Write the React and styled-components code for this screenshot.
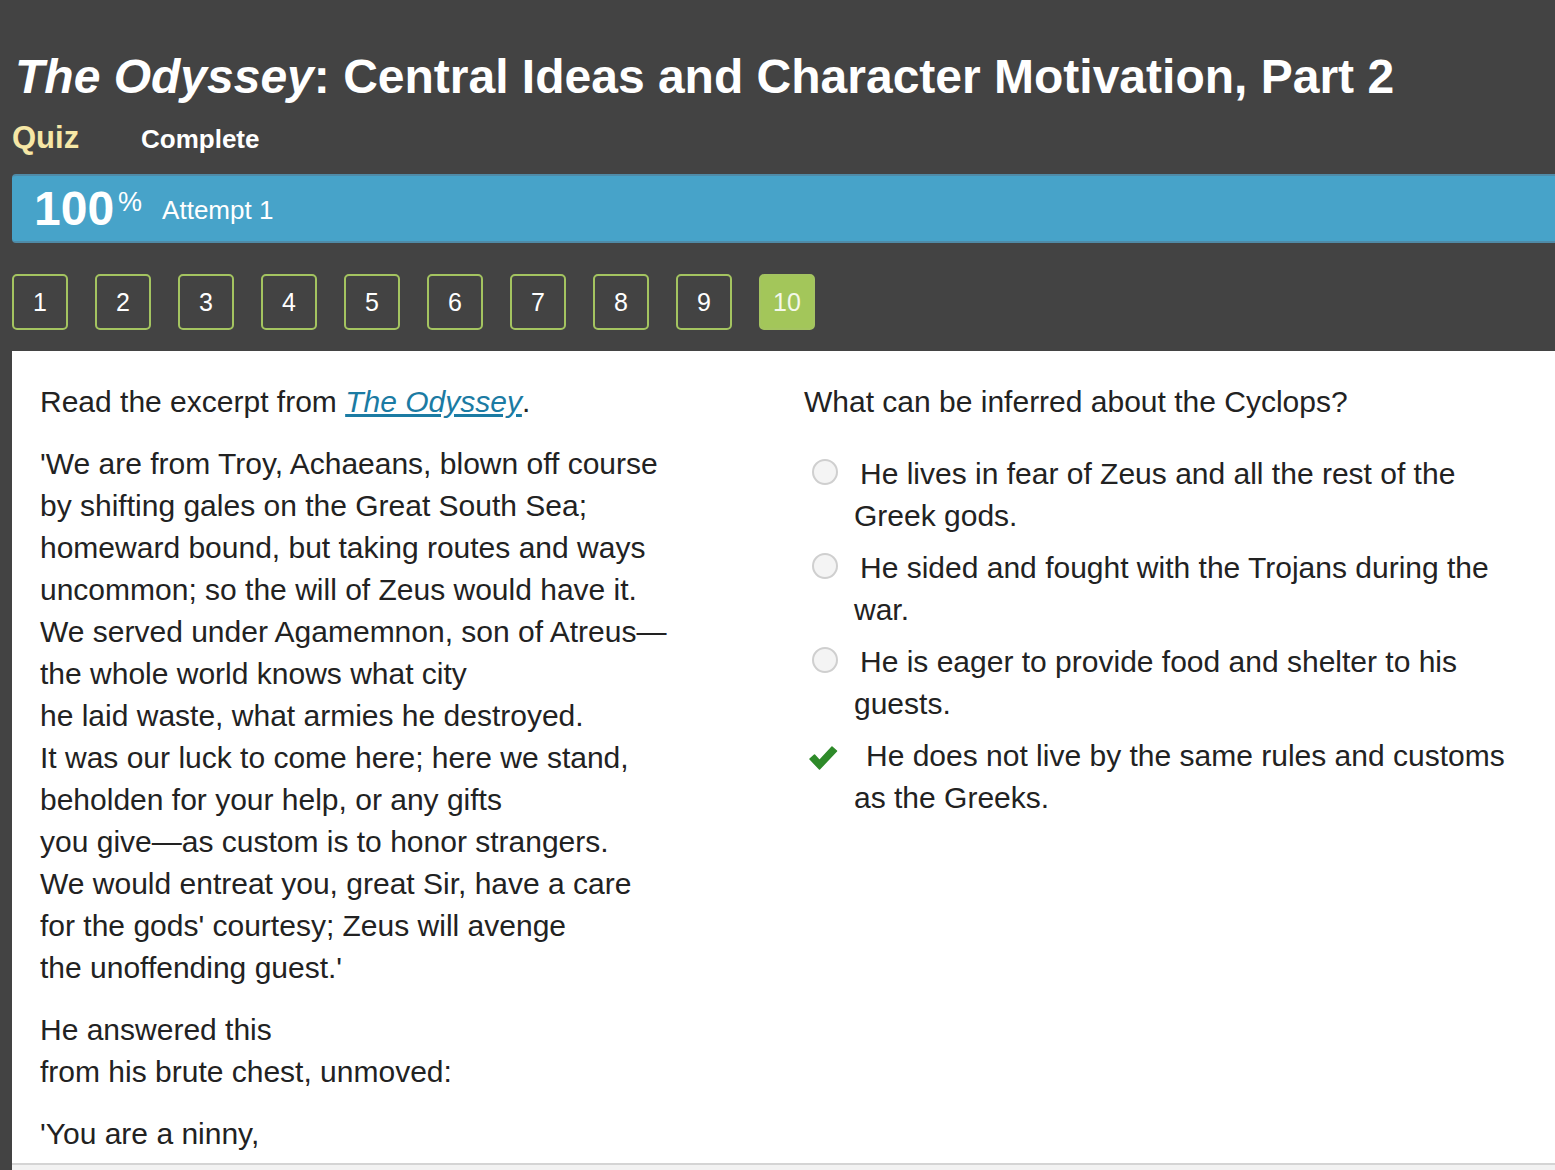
import React from 'react';
import styled, { createGlobalStyle } from 'styled-components';

const GlobalStyle = createGlobalStyle`
  html, body {
    margin: 0;
    padding: 0;
    background: #434343;
    font-family: "Liberation Sans", Arial, sans-serif;
  }
`;

const poem = [
  "'We are from Troy, Achaeans, blown off course",
  'by shifting gales on the Great South Sea;',
  'homeward bound, but taking routes and ways',
  'uncommon; so the will of Zeus would have it.',
  'We served under Agamemnon, son of Atreus—',
  'the whole world knows what city',
  'he laid waste, what armies he destroyed.',
  'It was our luck to come here; here we stand,',
  'beholden for your help, or any gifts',
  'you give—as custom is to honor strangers.',
  'We would entreat you, great Sir, have a care',
  "for the gods' courtesy; Zeus will avenge",
  "the unoffending guest.'",
];

const answers = [
  { text: 'He lives in fear of Zeus and all the rest of the Greek gods.' },
  { text: 'He sided and fought with the Trojans during the war.' },
  { text: 'He is eager to provide food and shelter to his guests.' },
  { text: 'He does not live by the same rules and customs as the Greeks.', correct: true },
];

const App = () => {
  return (
    <>
      <GlobalStyle />
      <Page>
        <Header>
          <Title>
            <em>The Odyssey</em>: Central Ideas and Character Motivation, Part 2
          </Title>
          <SubRow>
            <Kind>Quiz</Kind>
            <Status>Complete</Status>
          </SubRow>
        </Header>
        <ScoreBar>
          <Score>
            100<sup>%</sup>
          </Score>
          <Attempt>Attempt 1</Attempt>
        </ScoreBar>
        <Pager>
          {Array.from({ length: 10 }, (_, i) => (
            <PageButton key={i} active={i === 9}>
              {i + 1}
            </PageButton>
          ))}
        </Pager>
        <Panel>
          <Passage>
            <Para>
              Read the excerpt from <Link>The Odyssey</Link>.
            </Para>
            <Para>
              {poem.map((line, i) => (
                <Line key={i}>{line}</Line>
              ))}
            </Para>
            <Para>
              <Line>He answered this</Line>
              <Line>from his brute chest, unmoved:</Line>
            </Para>
            <Para>
              <Line>'You are a ninny,</Line>
            </Para>
          </Passage>
          <Question>
            <Para>What can be inferred about the Cyclops?</Para>
            <Options>
              {answers.map((a, i) => (
                <Option key={i}>
                  <Mark>
                    {a.correct ? (
                      <svg width="30" height="28" viewBox="0 0 30 28">
                        <path
                          d="M2 16 L6.5 12 L11.5 17.5 L24 4 L28.5 8 L11.5 26 Z"
                          fill="#2e8a29"
                          stroke="#2e8a29"
                          strokeWidth="1.5"
                          strokeLinejoin="round"
                        />
                      </svg>
                    ) : (
                      <Radio />
                    )}
                  </Mark>
                  <OptionText correct={a.correct}>{a.text}</OptionText>
                </Option>
              ))}
            </Options>
          </Question>
        </Panel>
        <Footer />
      </Page>
    </>
  );
};

const Page = styled.div`
  padding-left: 12px;
  overflow: hidden;
  height: 1170px;
  display: flex;
  flex-direction: column;
`;

const Header = styled.div`
  padding-top: 50px;
`;

const Title = styled.h1`
  margin: 0 0 0 3px;
  font-size: 48px;
  line-height: 54px;
  font-weight: bold;
  color: #ffffff;
  white-space: nowrap;

  em {
    font-style: italic;
  }
`;

const SubRow = styled.div`
  display: flex;
  align-items: baseline;
  margin-top: 16px;
  height: 42px;
`;

const Kind = styled.div`
  font-size: 31px;
  font-weight: bold;
  color: #f6e7a6;
  width: 129px;
`;

const Status = styled.div`
  font-size: 26px;
  font-weight: bold;
  color: #ffffff;
`;

const ScoreBar = styled.div`
  margin-top: 12px;
  height: 69px;
  box-sizing: border-box;
  display: flex;
  align-items: center;
  padding-left: 22px;
  background: #47a3c9;
  border-top: 2px solid #4f8ba8;
  border-bottom: 2px solid #4f8ba8;
  border-radius: 4px 0 0 4px;
  color: #ffffff;
  flex-shrink: 0;
`;

const Score = styled.div`
  font-size: 48px;
  font-weight: bold;
  line-height: 1;

  sup {
    font-size: 27px;
    font-weight: normal;
    vertical-align: top;
    position: relative;
    top: 4px;
    margin-left: 4px;
  }
`;

const Attempt = styled.div`
  font-size: 26px;
  margin-left: 20px;
  margin-top: 4px;
`;

const Pager = styled.div`
  display: flex;
  gap: 27px;
  padding: 31px 0 21px;
  flex-shrink: 0;
`;

const PageButton = styled.div`
  width: 56px;
  height: 56px;
  box-sizing: border-box;
  display: flex;
  align-items: center;
  justify-content: center;
  border: 2px solid #a4c460;
  border-radius: 5px;
  background: ${p => (p.active ? '#a3c65a' : 'transparent')};
  color: ${p => (p.active ? '#f4f8ea' : '#ffffff')};
  font-size: 25px;
`;

const Panel = styled.div`
  flex: 1;
  min-height: 0;
  overflow: hidden;
  background: #ffffff;
  display: grid;
  grid-template-columns: 764px 1fr;
  padding: 30px 0 0 28px;
  color: #222222;
  font-size: 30px;
  line-height: 42px;
`;

const Passage = styled.div``;

const Question = styled.div`
  padding-right: 40px;
`;

const Para = styled.div`
  margin-bottom: 20px;
`;

const Line = styled.div`
  white-space: nowrap;
`;

const Link = styled.span`
  color: #1b7ba3;
  font-style: italic;
  text-decoration: underline;
`;

const Options = styled.div`
  display: flex;
  flex-direction: column;
  gap: 10px;
  padding-top: 10px;
`;

const Option = styled.div`
  position: relative;
  padding-left: 50px;
`;

const Mark = styled.span`
  position: absolute;
  left: 4px;
  top: 5px;
`;

const Radio = styled.span`
  display: block;
  width: 22px;
  height: 22px;
  margin: 1px 0 0 4px;
  border: 2px solid #cfcfcf;
  border-radius: 50%;
  background: #f4f4f4;
`;

const OptionText = styled.div`
  text-indent: ${p => (p.correct ? '12px' : '6px')};
`;

const Footer = styled.div`
  height: 5px;
  flex-shrink: 0;
  background: #f2f2f2;
  border-top: 2px solid #d4d4d4;
`;

export default App;
